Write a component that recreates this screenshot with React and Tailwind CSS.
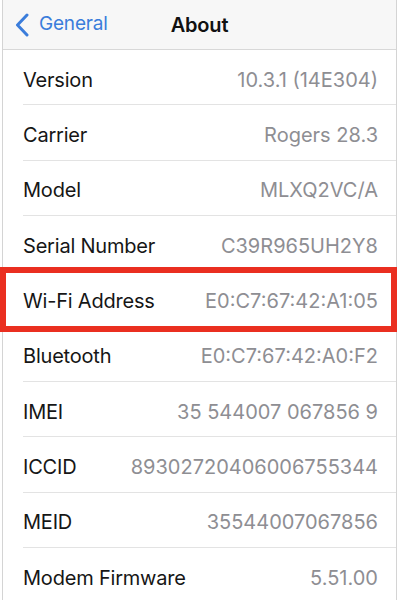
const rows = [
  ['Version', '10.3.1 (14E304)'],
  ['Carrier', 'Rogers 28.3'],
  ['Model', 'MLXQ2VC/A'],
  ['Serial Number', 'C39R965UH2Y8'],
  ['Wi-Fi Address', 'E0:C7:67:42:A1:05'],
  ['Bluetooth', 'E0:C7:67:42:A0:F2'],
  ['IMEI', '35 544007 067856 9'],
  ['ICCID', '89302720406006755344'],
  ['MEID', '35544007067856'],
  ['Modem Firmware', '5.51.00'],
]

export default function App() {
  return (
    <div
      className="relative w-[400px] h-[600px] overflow-hidden bg-white"
      style={{ fontFamily: 'Inter, "Liberation Sans", sans-serif' }}
    >
      <div className="ml-[2px] mr-[3px] h-full border-l border-r border-[#d4d4d4]">
        {/* nav bar */}
        <div className="relative flex items-center h-[50px] bg-[#f7f7f7] border-b border-[#d8d8d8]">
          <div className="flex items-center pl-[11px] text-[#3b7ddb]">
            <svg width="16" height="24" viewBox="0 0 16 24" fill="none">
              <path d="M13 2 L3.5 12 L13 22" stroke="currentColor" strokeWidth="3" strokeLinecap="round" strokeLinejoin="round" />
            </svg>
            <span className="ml-[9px] text-[19px] tracking-[-0.2px]">General</span>
          </div>
          <div className="absolute inset-0 flex items-center justify-center pointer-events-none">
            <span className="text-[20px] font-semibold text-[#111] tracking-[-0.2px]">About</span>
          </div>
        </div>

        {/* list */}
        <div className="flex flex-col">
          {rows.map(([label, value], i) => (
            <div key={label} className="pl-[20px]">
              <div
                className={`flex items-center justify-between h-[55.33px] pt-[5px] pr-[18px] ${
                  i < rows.length - 1 ? 'border-b border-[#e3e3e3]' : ''
                }`}
              >
                <span className="text-[20px] text-[#161616] tracking-[-0.2px]">{label}</span>
                <span className="text-[20px] text-[#8e8e93]">{value}</span>
              </div>
            </div>
          ))}
        </div>
      </div>

      {/* highlight */}
      <div className="absolute left-0 top-[267px] w-[397px] h-[65px] border-[6px] border-[#ea2f20] pointer-events-none" />
    </div>
  )
}
